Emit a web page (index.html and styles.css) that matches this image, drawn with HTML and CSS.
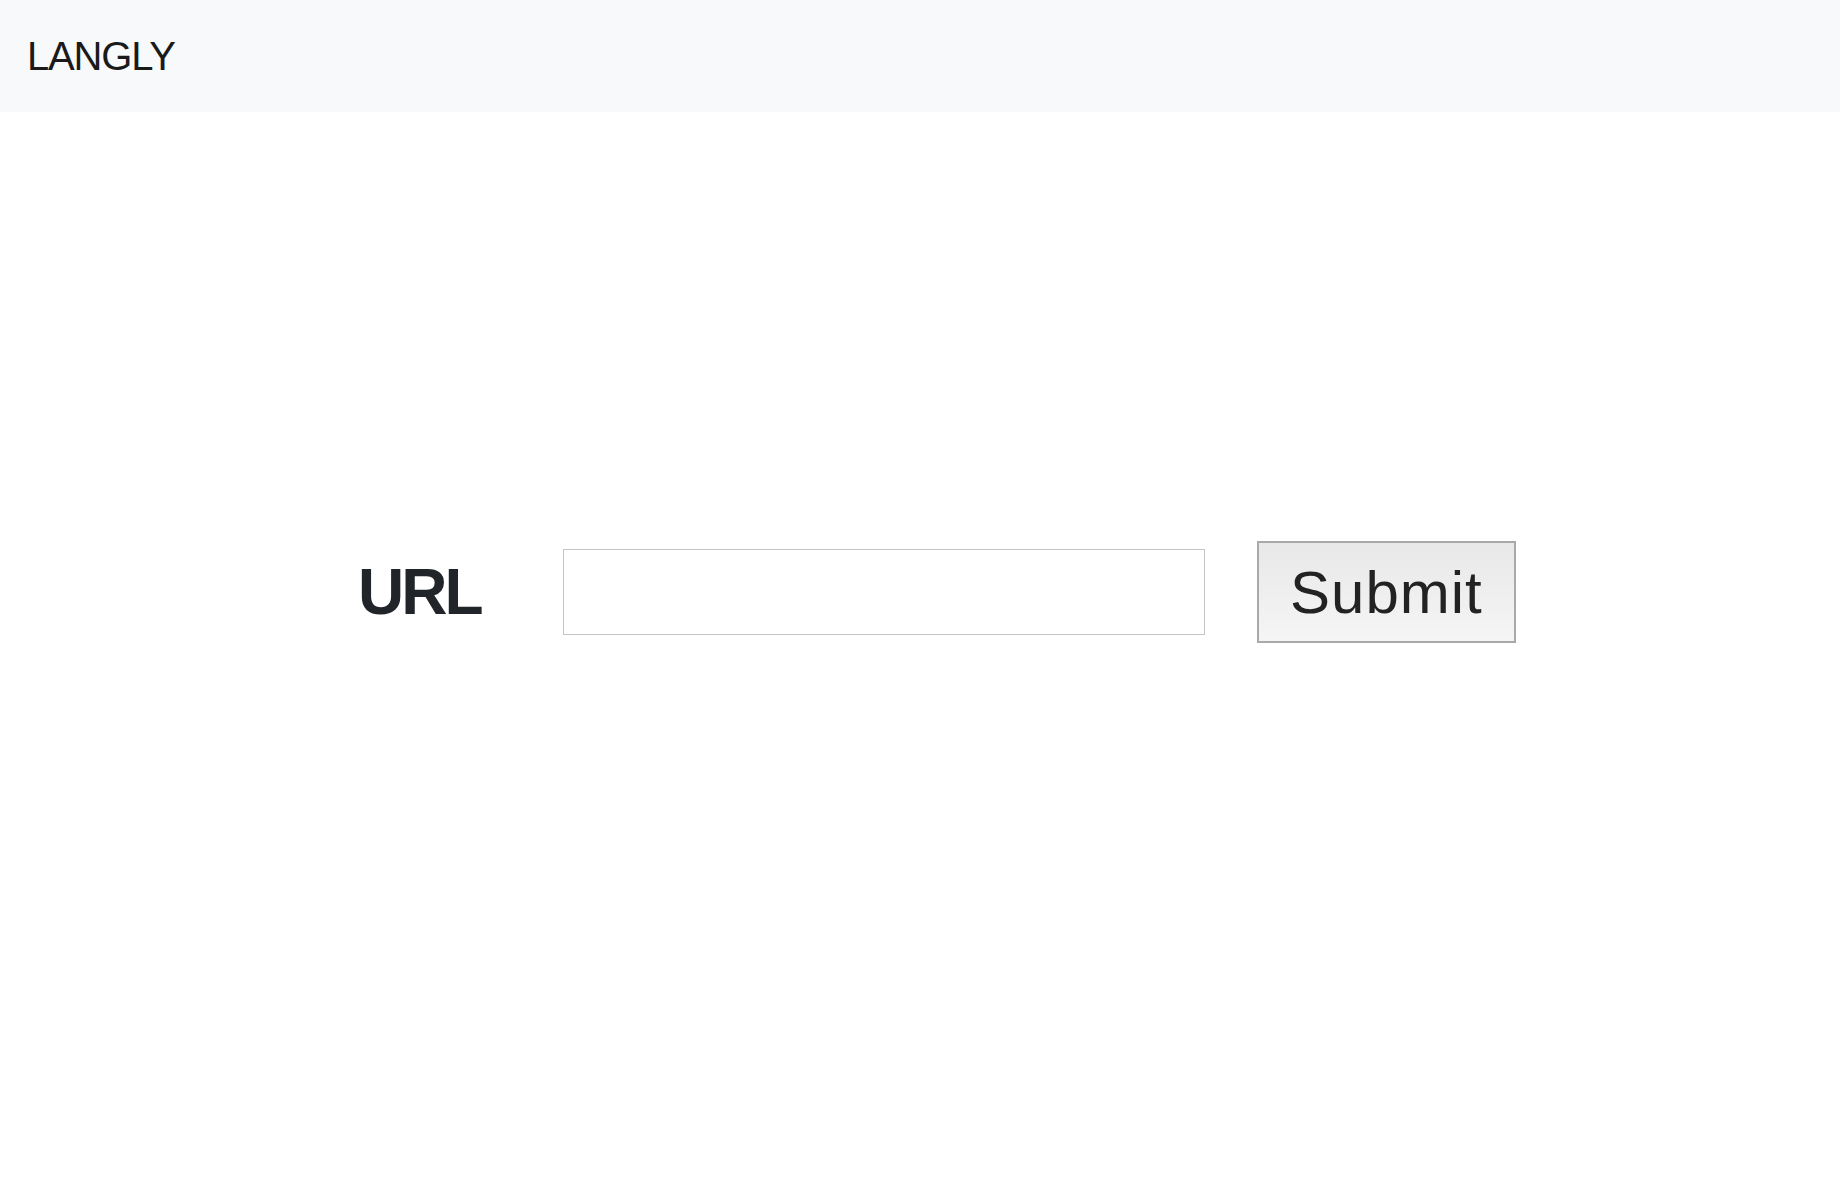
FILE: index.html
```html
<!DOCTYPE html>
<html lang="en">
<head>
<meta charset="utf-8">
<title>Langly</title>
<link rel="stylesheet" href="styles.css">
</head>
<body>
<nav class="navbar">
  <a class="brand" href="#">LANGLY</a>
</nav>
<main class="main">
  <form class="url-form">
    <label class="url-label" for="url">URL</label>
    <input class="url-input" id="url" type="text">
    <button class="submit-btn" type="button">Submit</button>
  </form>
</main>
</body>
</html>
```

FILE: styles.css
```css
html, body {
  margin: 0;
  padding: 0;
  background: #ffffff;
  font-family: "Liberation Sans", Arial, sans-serif;
  color: #212529;
}

.navbar {
  background: #f8f9fa;
  height: 112px;
  box-sizing: border-box;
  padding: 16px 27px;
  display: flex;
  align-items: center;
}

.brand {
  font-size: 40px;
  line-height: 60px;
  padding: 10px 0;
  color: #1a1a1a;
  text-decoration: none;
  letter-spacing: -1.2px;
}

.main {
  padding: 429px 0 0 358px;
}

.url-form {
  display: flex;
  align-items: center;
  margin: 0;
}

.url-label {
  width: 205px;
  font-size: 64px;
  font-weight: 700;
  line-height: 1.2;
  letter-spacing: -3px;
  color: #212529;
}

.url-input {
  width: 642px;
  height: 86px;
  box-sizing: border-box;
  border: 1px solid #c4c4c4;
  background: #fff;
  margin: 0 52px 0 0;
  padding: 0 12px;
  font-size: 40px;
  font-family: "Liberation Sans", Arial, sans-serif;
  outline: none;
}

.submit-btn {
  height: 102px;
  box-sizing: border-box;
  padding: 0 31px;
  border: 2px solid #a9a9a9;
  border-radius: 0;
  background: linear-gradient(#e8e8e8, #f5f5f5);
  font-family: "Liberation Sans", Arial, sans-serif;
  font-size: 60px;
  letter-spacing: 1px;
  color: #222;
  margin: 0;
}
```
